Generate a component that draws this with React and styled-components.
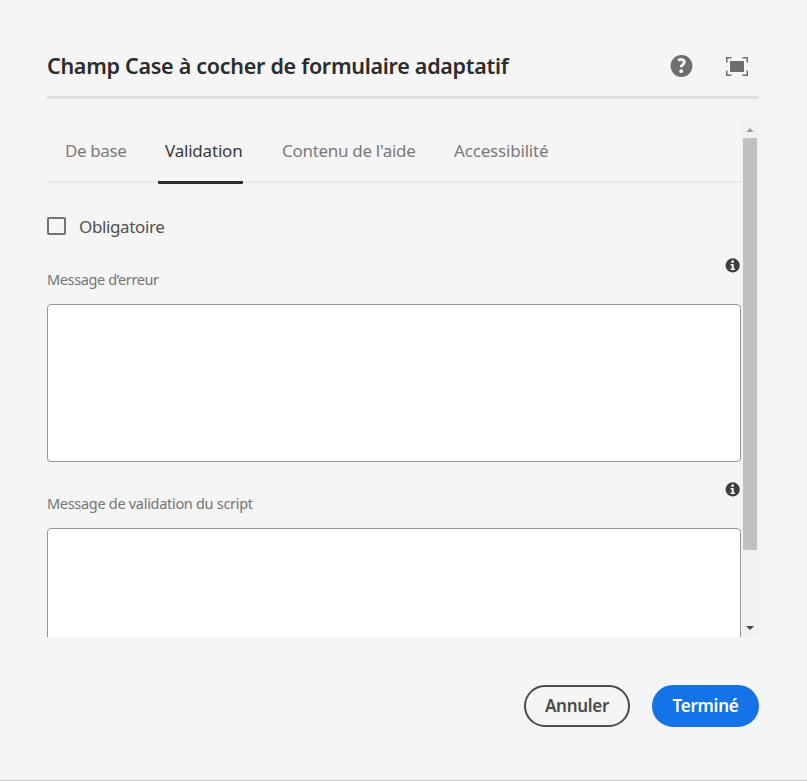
import React from 'react';
import styled, { createGlobalStyle } from 'styled-components';

const GlobalStyle = createGlobalStyle`
  *, *::before, *::after { box-sizing: border-box; }
  body {
    margin: 0;
    background: #f5f5f5;
    font-family: 'Noto Sans', 'Open Sans', sans-serif;
  }
  button { font-family: inherit; }
`;

const Dialog = styled.main`
  display: flex;
  flex-direction: column;
  width: 807px;
  height: 781px;
  padding: 34px 48px 0 47px;
  background: #f5f5f5;
  border-bottom: 1px solid #c8c8c8;
  overflow: hidden;
`;

const Header = styled.header`
  display: flex;
  align-items: center;
  flex: none;
  height: 65px;
  padding: 2px 11px 0 0;
  border-bottom: 3px solid #e1e1e1;
`;

const Title = styled.h1`
  flex: 1;
  margin: 0;
  color: #2c2c2c;
  font-size: 21.5px;
  font-weight: 600;
  line-height: 30px;
  letter-spacing: -0.28px;
  white-space: nowrap;
`;

const HeaderActions = styled.div`
  display: flex;
  align-items: center;
  gap: 33px;
`;

const IconButton = styled.button`
  display: flex;
  padding: 0;
  border: 0;
  background: none;
  color: #6e6e6e;
`;

const ScrollArea = styled.section`
  display: flex;
  flex: none;
  height: 516px;
  margin-top: 22px;
  overflow: hidden;
`;

const Content = styled.div`
  display: flex;
  flex-direction: column;
  width: 694px;
  height: 516px;
  overflow: hidden;
`;

const TabList = styled.nav`
  display: flex;
  flex: none;
  height: 63px;
  padding-left: 11px;
  background: linear-gradient(#eaeaea, #eaeaea) 0 60px / 100% 2px no-repeat;
`;

const Tab = styled.button`
  flex: none;
  width: ${({ $width }) => $width}px;
  height: 63px;
  margin-right: ${({ $gap }) => $gap}px;
  padding: 0 0 0 7px;
  border: 0;
  border-bottom: 3px solid ${({ $active }) => ($active ? '#2c2c2c' : 'transparent')};
  border-radius: 1px;
  background: none;
  color: ${({ $active }) => ($active ? '#3a3a3a' : '#7a7a7a')};
  font-size: 17px;
  font-weight: 400;
  letter-spacing: ${({ $spacing }) => $spacing}px;
  line-height: 60px;
  text-align: left;
  white-space: nowrap;
`;

const CheckboxRow = styled.label`
  display: flex;
  align-items: center;
  flex: none;
  gap: 13px;
  height: 20px;
  margin-top: 32px;
  color: #505050;
  font-size: 17px;
  font-weight: 400;
  line-height: 20px;
  letter-spacing: -0.38px;
`;

const CheckboxBox = styled.span`
  width: 19px;
  height: 18px;
  margin-bottom: 1px;
  border: 2px solid #747474;
  border-radius: 2px;
`;

const CheckboxText = styled.span`
  padding-top: 2px;
`;

const Field = styled.div`
  display: flex;
  flex-direction: column;
  flex: none;
  height: 223.5px;
`;

const FieldList = styled.div`
  display: flex;
  flex-direction: column;
  flex: none;
  padding-top: 22px;
`;

const FieldHeader = styled.div`
  display: flex;
  align-items: flex-start;
  justify-content: space-between;
  height: 46px;
  color: #3f3f3f;
`;

const FieldLabel = styled.label`
  padding-top: 11px;
  color: #747474;
  font-size: 14.5px;
  font-weight: 400;
  line-height: 20px;
  letter-spacing: ${({ $spacing }) => $spacing}px;
`;

const TextBox = styled.textarea`
  display: block;
  width: 694px;
  height: 158px;
  margin: 0;
  border: 1px solid #959595;
  border-radius: 4px;
  outline: 0;
  background: #fff;
  resize: none;
`;

const Scrollbar = styled.div`
  display: flex;
  flex-direction: column;
  align-items: center;
  width: 18px;
  height: 516px;
  background: #f1f1f1;
`;

const ScrollArrow = styled.span`
  display: flex;
  align-items: center;
  justify-content: center;
  height: ${({ $down }) => ($down ? 18 : 17)}px;
  color: ${({ $down }) => ($down ? '#454545' : '#a0a0a0')};
`;

const ScrollThumb = styled.span`
  width: 14px;
  height: 412px;
  margin-bottom: auto;
  background: #c1c1c1;
`;

const Footer = styled.footer`
  display: flex;
  justify-content: flex-end;
  gap: 22px;
  margin-top: 48px;
`;

const PillButton = styled.button`
  width: ${({ $primary }) => ($primary ? 107 : 106)}px;
  height: 42px;
  padding: 0;
  border: 2px solid ${({ $primary }) => ($primary ? '#1473e6' : '#4b4b4b')};
  border-radius: 21px;
  background: ${({ $primary }) => ($primary ? '#1473e6' : 'transparent')};
  color: ${({ $primary }) => ($primary ? '#fff' : '#4b4b4b')};
  font-size: 17px;
  font-weight: 600;
  letter-spacing: -0.28px;
  line-height: 36px;
`;

const HelpIcon = () => (
  <svg width="23" height="22" viewBox="0 0 23 22" fill="none">
    <circle cx="11.5" cy="11" r="10.9" fill="currentColor" />
    <path
      d="M8 5.3c2.8-1.5 6.3-.9 6.3 1.7 0 2.6-3.1 2.7-3.1 5.3"
      stroke="#f5f5f5"
      strokeWidth="2.8"
    />
    <circle cx="11.2" cy="16.2" r="1.9" fill="#f5f5f5" />
  </svg>
);

const FullscreenIcon = () => (
  <svg width="22" height="19" viewBox="0 0 22 19" fill="none">
    <rect x="4" y="4" width="14" height="11" fill="currentColor" />
    <path
      d="M.75 5.5V.75H5.5M16.5.75h4.75V5.5M21.25 13.5v4.75H16.5M5.5 18.25H.75V13.5"
      stroke="currentColor"
      strokeWidth="1.5"
    />
  </svg>
);

const InfoIcon = () => (
  <svg width="16" height="15" viewBox="0 0 16 15">
    <circle cx="7.7" cy="7.4" r="7.1" fill="currentColor" />
    <circle cx="7.6" cy="3.7" r="1.4" fill="#f5f5f5" />
    <path d="M5.6 6h3.1v4.6h1.2V12H5.6v-1.4h1.2V7.4H5.6z" fill="#f5f5f5" />
  </svg>
);

const ArrowIcon = ({ down }) => (
  <svg width="8" height="4" viewBox="0 0 8 4">
    <path d={down ? 'M0 0h8L4 4z' : 'M0 4h8L4 0z'} fill="currentColor" />
  </svg>
);

const tabs = [
  { label: 'De base', width: 76, gap: 24, spacing: -0.4 },
  { label: 'Validation', width: 85, gap: 32, spacing: -0.2, active: true },
  { label: "Contenu de l'aide", width: 149, gap: 23, spacing: -0.3 },
  { label: 'Accessibilité', width: 110, gap: 0, spacing: -0.18 },
];

const fields = [
  { id: 'error', label: 'Message d’erreur', spacing: -0.38 },
  { id: 'script', label: 'Message de validation du script', spacing: -0.3 },
];

export default function App() {
  return (
    <>
      <GlobalStyle />
      <Dialog>
        <Header>
          <Title>Champ Case à cocher de formulaire adaptatif</Title>
          <HeaderActions>
            <IconButton><HelpIcon /></IconButton>
            <IconButton><FullscreenIcon /></IconButton>
          </HeaderActions>
        </Header>
        <ScrollArea>
          <Content>
            <TabList>
              {tabs.map((t) => (
                <Tab key={t.label} $width={t.width} $gap={t.gap} $spacing={t.spacing} $active={t.active}>
                  {t.label}
                </Tab>
              ))}
            </TabList>
            <CheckboxRow>
              <CheckboxBox />
              <CheckboxText>Obligatoire</CheckboxText>
            </CheckboxRow>
            <FieldList>
              {fields.map((f) => (
                <Field key={f.id}>
                  <FieldHeader>
                    <FieldLabel htmlFor={f.id} $spacing={f.spacing}>{f.label}</FieldLabel>
                    <InfoIcon />
                  </FieldHeader>
                  <TextBox id={f.id} />
                </Field>
              ))}
            </FieldList>
          </Content>
          <Scrollbar>
            <ScrollArrow><ArrowIcon /></ScrollArrow>
            <ScrollThumb />
            <ScrollArrow $down><ArrowIcon down /></ScrollArrow>
          </Scrollbar>
        </ScrollArea>
        <Footer>
          <PillButton>Annuler</PillButton>
          <PillButton $primary>Terminé</PillButton>
        </Footer>
      </Dialog>
    </>
  );
}
